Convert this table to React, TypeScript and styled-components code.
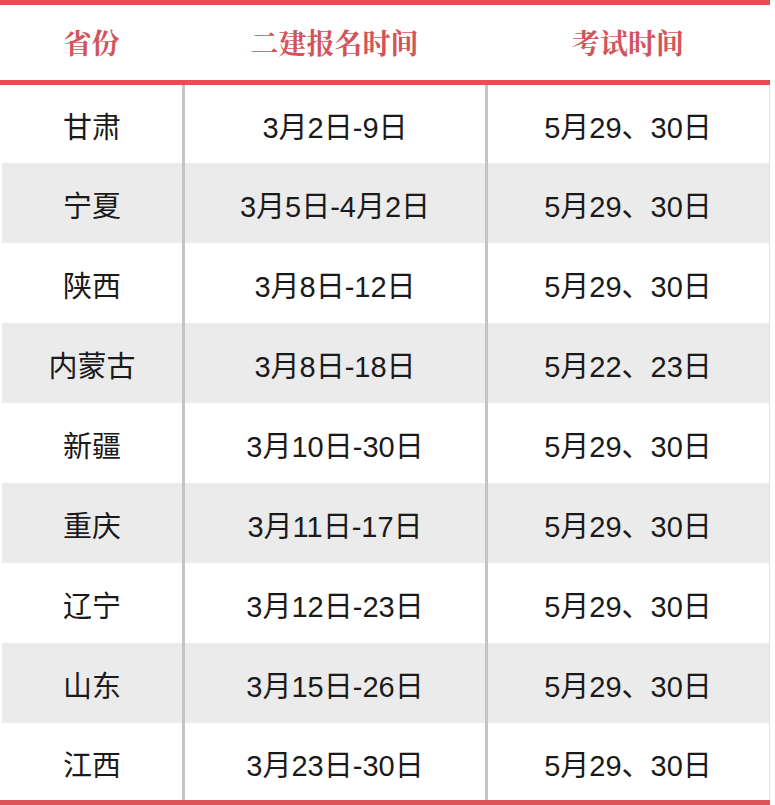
import styled, { createGlobalStyle } from 'styled-components';

const rows = [
  ['甘肃', '3月2日-9日', '5月29、30日'],
  ['宁夏', '3月5日-4月2日', '5月29、30日'],
  ['陕西', '3月8日-12日', '5月29、30日'],
  ['内蒙古', '3月8日-18日', '5月22、23日'],
  ['新疆', '3月10日-30日', '5月29、30日'],
  ['重庆', '3月11日-17日', '5月29、30日'],
  ['辽宁', '3月12日-23日', '5月29、30日'],
  ['山东', '3月15日-26日', '5月29、30日'],
  ['江西', '3月23日-30日', '5月29、30日'],
];

const GlobalStyle = createGlobalStyle`
  html, body {
    margin: 0;
    padding: 0;
    background: #ffffff;
  }
`;

const App = () => {
  return (
    <>
      <GlobalStyle />
      <Table>
        <Head>
          <HeadCell>省份</HeadCell>
          <HeadCell>二建报名时间</HeadCell>
          <HeadCell>考试时间</HeadCell>
        </Head>
        <Body>
          {rows.map(([province, signup, exam], i) => (
            <Row key={province} $striped={i % 2 === 1}>
              <Cell>{province}</Cell>
              <Cell $divider>{signup}</Cell>
              <Cell $divider>{exam}</Cell>
            </Row>
          ))}
        </Body>
      </Table>
    </>
  );
};

const Table = styled.div`
  width: 770px;
  border-top: 5px solid #dc5257;
  border-bottom: 5px solid #dc5257;
`;

const Head = styled.div`
  display: grid;
  grid-template-columns: 183px 303px 284px;
  height: 75px;
  border-bottom: 5px solid #dc5257;
`;

const HeadCell = styled.div`
  display: flex;
  align-items: center;
  justify-content: center;
  color: #d2545b;
  font-family: 'Noto Serif CJK SC', 'Noto Serif SC', 'Noto Sans CJK SC', serif;
  font-size: 28px;
  font-weight: 700;
  padding-bottom: 2px;
`;

const Body = styled.div`
  display: flex;
  flex-direction: column;
`;

const Row = styled.div<{ $striped?: boolean }>`
  display: grid;
  grid-template-columns: 180px 303px 283px;
  height: 80px;
  padding-left: 2px;
  border-right: 1px solid #e2e2e2;
  background: ${({ $striped }) => ($striped ? '#ebebeb' : '#ffffff')};
  background-clip: content-box;

  &:first-child {
    height: 78px;
  }

  &:last-child {
    height: 77px;
  }
`;

const Cell = styled.div<{ $divider?: boolean }>`
  display: flex;
  align-items: center;
  justify-content: center;
  border-left: ${({ $divider }) => ($divider ? '3px solid #c4c4c4' : 'none')};
  color: #1a1a1a;
  font-family: 'Liberation Sans', 'Noto Sans CJK SC', sans-serif;
  font-size: 29px;
  padding-top: 2px;
`;

export default App;
